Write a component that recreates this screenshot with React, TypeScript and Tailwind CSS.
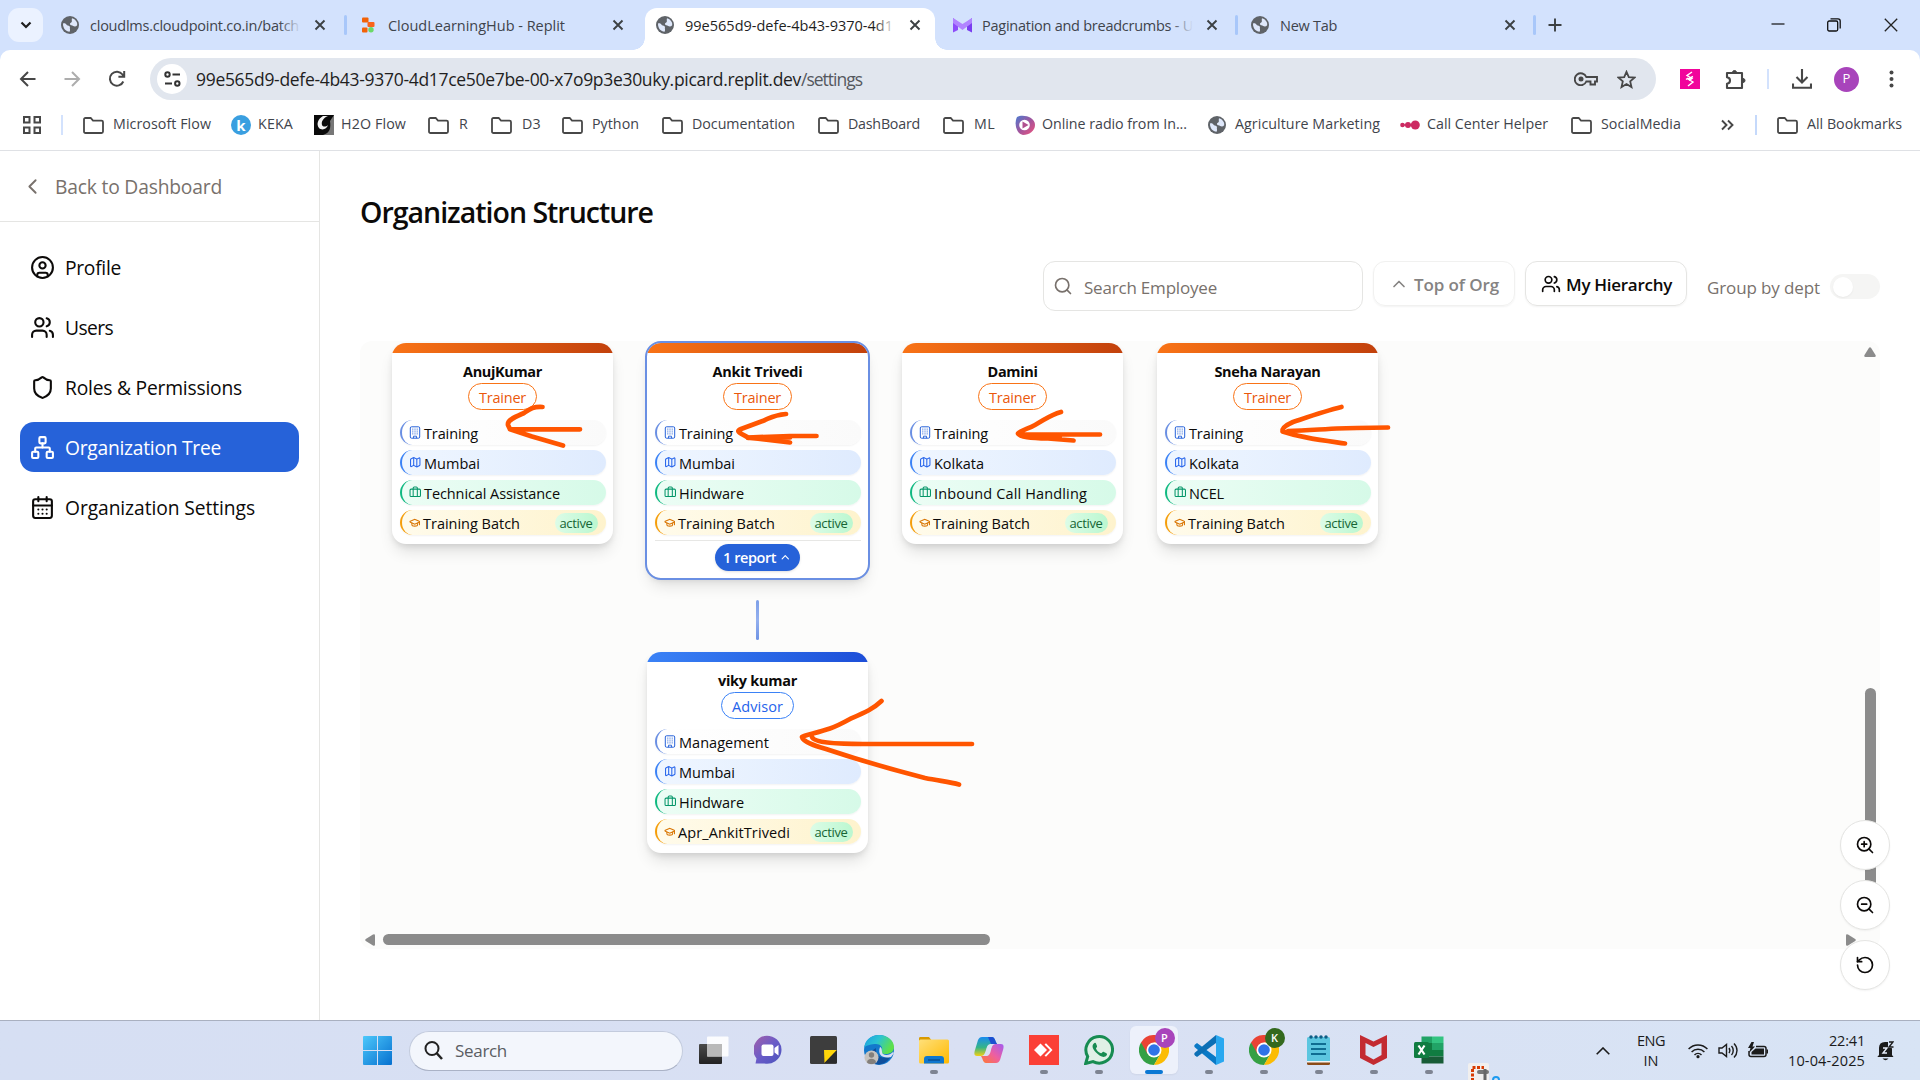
import React, { useLayoutEffect, useRef, useState } from "react";
import {
  Briefcase, CalendarDays, ChevronLeft, ChevronUp, CircleUser, GraduationCap,
  Map as MapIcon, Network, RotateCcw, Search, Shield, Users, ZoomIn, ZoomOut,
} from "lucide-react";

/* A single-line label whose tracking adapts so that it fills the given measure. */
function T({ w, className = "", children }: { w?: number; className?: string; children: string }) {
  const ref = useRef<HTMLSpanElement>(null);
  const [ls, setLs] = useState(0);
  useLayoutEffect(() => {
    if (w && ref.current) setLs((w - ref.current.getBoundingClientRect().width) / children.length);
  }, [w, children]);
  return (
    <span ref={ref} className={"shrink-0 whitespace-pre " + className} style={{ letterSpacing: ls }}>
      {children}
    </span>
  );
}

const Globe = () => (
  <svg className="size-[18px] shrink-0" viewBox="0 0 18 18">
    <circle cx="9" cy="9" r="9" fill="#5f6368" />
    <path d="M2 7.500C3.500 7 5 7.500 5.500 8.800c.5 1.200 2 .6 3 1.400.9.700.2 1.600.4 2.500.2 1.200.3 1.800-.4 3C5 15.500 1.800 12.500 2 7.500zM11 2.200c2 .5 3.700 1.800 4.700 3.800.5 1.200.6 2 .5 3.200-1 1.300-2.700 1.500-4 .8-1.100-.6-2.800-.5-3.200-1.700-.4-1.300 1.200-1.400 1.700-2.300.5-1.100-.3-2.400.3-3.800z" fill="#dfe8fb" />
  </svg>
);
const Folder = () => (
  <svg className="h-[17px] w-[21px] shrink-0" viewBox="0 0 21 17" fill="none" stroke="#474747" strokeWidth="1.800">
    <path d="M1 2.500C1 1.700 1.600 1 2.500 1h5.200l2.300 2.600h8.500c.9 0 1.500.7 1.500 1.500v9.400c0 .8-.6 1.500-1.500 1.500h-16C1.600 16 1 15.300 1 14.500z" />
  </svg>
);
const Close = ({ c = "#3c4043" }: { c?: string }) => (
  <svg className="size-[14px] shrink-0" viewBox="0 0 14 14" stroke={c} strokeWidth="1.900"><path d="M2.500 2.500l9 9M11.500 2.500l-9 9" /></svg>
);
const ReplitIcon = () => (
  <svg className="size-[18px] shrink-0" viewBox="0 0 18 18">
    <rect x="3" y="1.500" width="6.500" height="5" rx="1" fill="#f26207" /><rect x="8.500" y="6" width="7" height="5" rx="1" fill="#f9631a" />
    <rect x="3" y="11.500" width="5.500" height="5" rx="1" fill="#f26207" /><circle cx="12" cy="13.800" r="2.700" fill="#6bd968" />
  </svg>
);
const MIcon = () => (
  <svg className="h-[16px] w-[19px] shrink-0" viewBox="0 0 19 16">
    <path d="M0 1l5 4v8l-5 2.500z" fill="#8d4dfa" /><path d="M19 1l-5 4v8l5 2.500z" fill="#7a3df0" /><path d="M0 1l9.500 6L19 1v5l-9.500 7L0 6z" fill="#b184ff" />
  </svg>
);
/* Office block with a dense grid of windows. */
const OfficeIcon = () => (
  <svg className="h-[13px] w-[12px] shrink-0" viewBox="0 0 12 13" fill="none" stroke="#2662d9">
    <rect x="1.300" y=".8" width="9.400" height="11.400" rx="1.200" strokeWidth="1" />
    <path d="M3.800 2.500v6.500M6 2.500v6.500M8.200 2.500v6.500" strokeWidth=".9" strokeDasharray="1.300 .7" strokeOpacity=".85" />
    <path d="M4.500 12.200v-2h3v2" strokeWidth=".9" />
  </svg>
);

function Tab({ box, icon, title, w, fade, color = "text-[#3f444c]" }: { box: string; icon: React.ReactNode; title: string; w: number; fade?: string; color?: string }) {
  return (
    <div className={"flex h-full shrink-0 items-center " + box}>
      <div className="flex w-[19px] shrink-0 items-center">{icon}</div>
      <div className="relative ml-[10px] w-[211px]">
        <T w={w} className={"text-[14.500px] leading-5 " + color}>{title}</T>
        {fade && <div className={"absolute inset-y-0 right-0 w-[22px] bg-linear-to-r from-transparent " + fade} />}
      </div>
      <div className="ml-auto flex"><Close /></div>
    </div>
  );
}
const TabSep = () => <div className="h-5 w-[3px] shrink-0 rounded-full bg-[#a8c7fa]" />;

function TabStrip() {
  return (
    <div className="flex h-[50px] items-center bg-[#d3e2fd] pl-2">
      <div className="mr-[6px] flex h-[34px] w-[35px] shrink-0 items-center justify-center rounded-[11px] bg-[#ebf2ff]">
        <svg className="size-[12px]" viewBox="0 0 12 12" fill="none" stroke="#1f1f1f" strokeWidth="2.200"><path d="M1.500 3.500L6 8l4.500-4.500" /></svg>
      </div>
      <Tab box="w-[295px] pl-[12px] pr-[17px]" icon={<Globe />} title="cloudlms.cloudpoint.co.in/batch" w={209} fade="to-[#d3e2fd]" />
      <TabSep />
      <Tab box="w-[286px] pl-[12px] pr-[8px]" icon={<ReplitIcon />} title="CloudLearningHub - Replit" w={177} />
      <div className="h-3 w-3 shrink-0 self-end bg-[radial-gradient(circle_at_0_0,#d3e2fd_11.500px,#fff_12px)]" />
      <div className="h-[42px] w-[290px] shrink-0 self-end rounded-t-[12px] bg-white pb-2">
        <Tab box="w-full pl-[11px] pr-[13px]" icon={<Globe />} title="99e565d9-defe-4b43-9370-4d1" w={208} fade="to-white" color="text-[#1f1f1f]" />
      </div>
      <div className="h-3 w-3 shrink-0 self-end bg-[radial-gradient(circle_at_100%_0,#d3e2fd_11.500px,#fff_12px)]" />
      <Tab box="w-[288px] pl-[6px] pr-[16px]" icon={<MIcon />} title="Pagination and breadcrumbs - U" w={211} fade="to-[#d3e2fd]" />
      <TabSep />
      <Tab box="w-[295px] pl-[13px] pr-[16px]" icon={<Globe />} title="New Tab" w={57} />
      <TabSep />
      <svg className="ml-[12px] size-[14px] shrink-0" viewBox="0 0 14 14" stroke="#3c4043" strokeWidth="1.900"><path d="M7 .500v13M.500 7h13" /></svg>
      <div className="ml-auto flex items-center pr-[22px]">
        <svg className="h-[14px] w-[14px]" viewBox="0 0 14 14" stroke="#111" strokeWidth="1.200"><path d="M.500 6h13" /></svg>
        <svg className="ml-[42px] size-[14px]" viewBox="0 0 14 14" fill="none" stroke="#111" strokeWidth="1.300"><rect x=".7" y="3" width="10" height="10" rx="1.500" /><path d="M3.500 .800h7.500c1.200 0 2.200 1 2.200 2.200v7.500" /></svg>
        <svg className="ml-[43px] size-[14px]" viewBox="0 0 14 14" stroke="#222" strokeWidth="1.300"><path d="M.800 .800l12.400 12.400M13.200 .800L.800 13.200" /></svg>
      </div>
    </div>
  );
}

function Toolbar() {
  return (
    <div className="bg-[#d3e2fd]">
      <div className="flex h-[58px] items-center rounded-t-[10px] bg-white pl-[19px]">
        <svg className="size-[18px]" viewBox="0 0 18 18" fill="none" stroke="#474747" strokeWidth="2"><path d="M16.500 9H2.500M9 2L2 9l7 7" /></svg>
        <svg className="ml-[26px] size-[18px]" viewBox="0 0 18 18" fill="none" stroke="#adadad" strokeWidth="2"><path d="M1.500 9h14M9 2l7 7-7 7" /></svg>
        <svg className="ml-[27px] size-[18px]" viewBox="0 0 18 18" fill="none" stroke="#474747" strokeWidth="2"><path d="M15.300 11.500A7 7 0 1 1 14.500 4.500L16 6.200M16.200 1v5.800h-5.800" /></svg>
        <div className="ml-[24px] flex h-[42px] w-[1506px] shrink-0 items-center rounded-full bg-[#e1e6ee] pl-[7px]">
          <div className="flex size-[30px] shrink-0 items-center justify-center rounded-full bg-white">
            <svg className="h-[16px] w-[17px]" viewBox="0 0 17 16" fill="none" stroke="#333" strokeWidth="2"><circle cx="3.500" cy="3.500" r="2.200" /><path d="M8.500 3.500H16M1 12.500h7" /><circle cx="13.300" cy="12.500" r="2.200" /></svg>
          </div>
          <T w={605} className="ml-[9px] text-[17.500px] text-[#1f1f1f]">99e565d9-defe-4b43-9370-4d17ce50e7be-00-x7o9p3e30uky.picard.replit.dev</T>
          <T w={61} className="text-[17.500px] text-[#55585e]">/settings</T>
          <svg className="ml-auto h-[14px] w-[24px]" viewBox="0 0 24 14" fill="none" stroke="#474747" strokeWidth="1.900"><path d="M12.300 5A6 6 0 1 0 12.300 9.500H16.500v3h4.500v-3h2V5z" /><circle cx="7" cy="7" r="2.500" fill="#474747" stroke="none" /></svg>
          <svg className="mr-[20px] ml-[19px] size-[19px]" viewBox="0 0 19 19" fill="none" stroke="#474747" strokeWidth="1.800"><path d="M9.500 1.800l2.300 5.300 5.700.5-4.300 3.800 1.300 5.700-5-3-5 3 1.300-5.700L1.500 7.600l5.700-.5z" /></svg>
        </div>
        <svg className="ml-[24px] size-[20px] shrink-0" viewBox="0 0 20 20" fill="none"><path fill="#f1049b" d="M0 0h20v20H0z" /><path d="M12 3L7 6.500l5 3-3 2M13 7.500l-5 2.500 5 3-5 4M8 9L6 10.500" stroke="#fff" strokeWidth="1.400" /></svg>
        <svg className="ml-[25px] size-[21px] shrink-0" viewBox="0 0 21 21" fill="none" stroke="#474747" strokeWidth="2.100"><path d="M2 4h15v15H2v-4.300c2-.3 3-1.500 3-3.200S4 8.600 2 8.300z" strokeLinejoin="round" /><path d="M7.500 3.500a2 2 0 0 1 4 0zM18 9.500a2 2 0 0 1 0 4z" fill="#474747" strokeWidth="1" /></svg>
        <div className="ml-[21px] h-5 w-[2px] bg-[#d3e2fd]" />
        <svg className="ml-[23px] size-[20px] shrink-0" viewBox="0 0 20 20" fill="none" stroke="#474747" strokeWidth="2.100"><path d="M10 0v13M4.500 8l5.500 5.500L15.500 8M1 14.500v4.300h18v-4.300" /></svg>
        <div className="ml-[22px] flex size-[25px] shrink-0 items-center justify-center rounded-full bg-[#a844bb] text-[13px] text-white">P</div>
        <svg className="ml-[30px] h-[18px] w-[5px]" viewBox="0 0 5 18" fill="#474747"><circle cx="2.500" cy="2.500" r="2" /><circle cx="2.500" cy="9" r="2" /><circle cx="2.500" cy="15.500" r="2" /></svg>
      </div>
    </div>
  );
}

const bookmarks: { slot: string; icon: React.ReactNode; label: string; w: number; gap?: string }[] = [
  { slot: "w-[148px]", icon: <Folder />, label: "Microsoft Flow", w: 98, gap: "ml-[9px]" },
  { slot: "w-[83px]", icon: <div className="flex size-[20px] items-center justify-center rounded-full bg-[#3a9fe0] text-[15px] font-bold leading-none text-white">k</div>, label: "KEKA", w: 35 },
  { slot: "w-[114px]", icon: <svg className="size-[20px]" viewBox="0 0 20 20"><path d="M0 0h20v20H0z" fill="#0a0a0a" /><path d="M20 0v20H9c7-2 8-7 7-14z" fill="#777" /><path d="M9 1C4 4 2 9 5 13c3 3 8 1 9-3-2 2-5 2-6 0-1-3 1-7 6-9z" fill="#f3f3f3" /></svg>, label: "H2O Flow", w: 65 },
  { slot: "w-[63px]", icon: <Folder />, label: "R", w: 9, gap: "ml-[10px]" },
  { slot: "w-[71px]", icon: <Folder />, label: "D3", w: 19, gap: "ml-[10px]" },
  { slot: "w-[100px]", icon: <Folder />, label: "Python", w: 47, gap: "ml-[9px]" },
  { slot: "w-[156px]", icon: <Folder />, label: "Documentation", w: 103, gap: "ml-[9px]" },
  { slot: "w-[125px]", icon: <Folder />, label: "DashBoard", w: 72, gap: "ml-[9px]" },
  { slot: "w-[72px]", icon: <Folder />, label: "ML", w: 21, gap: "ml-[10px]" },
  { slot: "w-[193px]", icon: <svg className="size-[20px]" viewBox="0 0 20 20"><defs><linearGradient id="rad" x1="0" y1="0" x2="1" y2="1"><stop offset="0" stopColor="#4a7bd0" /><stop offset=".5" stopColor="#a2559d" /><stop offset="1" stopColor="#f0527a" /></linearGradient></defs><path d="M2 2c6-3 18 0 18 8 0 6-6 10-12 10C1 19-1 8 2 2z" fill="url(#rad)" /><circle cx="9.500" cy="10" r="5.300" fill="#fff" /><path d="M7.500 6.500l6 3.500-6 3.500z" fill="#b0508f" /></svg>, label: "Online radio from In...", w: 145 },
  { slot: "w-[192px]", icon: <Globe />, label: "Agriculture Marketing", w: 145, gap: "ml-[9px]" },
  { slot: "w-[171px]", icon: <svg className="h-[10px] w-[20px]" viewBox="0 0 20 10" fill="#cc2a62"><circle cx="2.500" cy="5" r="2.300" /><path d="M2 4.300h12v1.400H2z" /><circle cx="8" cy="5" r="3" /><circle cx="15.300" cy="5" r="4.500" /></svg>, label: "Call Center Helper", w: 121 },
  { slot: "w-[150px]", icon: <Folder />, label: "SocialMedia", w: 80, gap: "ml-[9px]" },
];

function BookmarksBar() {
  return (
    <div className="flex h-[43px] items-center border-b border-[#dfe1e5] bg-white pb-[8px] pl-[23px] text-[14.250px] text-[#3f444c]">
      <svg className="size-[18px] shrink-0" viewBox="0 0 18 18" fill="none" stroke="#474747" strokeWidth="2"><path d="M1 1h5.500v5.500H1zM11.500 1H17v5.500h-5.500zM1 11.500h5.500V17H1zM11.500 11.500H17V17h-5.500z" /></svg>
      <div className="mr-[20px] ml-[20px] h-5 w-[2px] shrink-0 bg-[#d3e2fd]" />
      {bookmarks.map((b) => (
        <div key={b.label} className={"flex shrink-0 items-center " + b.slot}>
          {b.icon}
          <T w={b.w} className={"pb-[2px] " + (b.gap ?? "ml-[7px]")}>{b.label}</T>
        </div>
      ))}
      <svg className="h-[12px] w-[13px] shrink-0" viewBox="0 0 13 12" fill="none" stroke="#474747" strokeWidth="1.900"><path d="M1 1.500L5.500 6 1 10.500M7 1.500L11.500 6 7 10.500" /></svg>
      <div className="mr-[20px] ml-[21px] h-5 w-[2px] shrink-0 bg-[#c5d9fb]" />
      <Folder />
      <T w={95} className="ml-[9px] pb-[2px]">All Bookmarks</T>
    </div>
  );
}

const nav = [
  { icon: CircleUser, label: "Profile", w: 56 },
  { icon: Users, label: "Users", w: 48 },
  { icon: Shield, label: "Roles & Permissions", w: 177 },
  { icon: Network, label: "Organization Tree", w: 156, active: true },
  { icon: CalendarDays, label: "Organization Settings", w: 190 },
];

function Sidebar() {
  return (
    <aside className="flex w-[320px] shrink-0 flex-col border-r border-[#e5e5e3]">
      <div className="flex h-[71px] items-center border-b border-[#e5e5e3] pl-[20px] text-[#78716c]">
        <ChevronLeft className="size-[25px]" strokeWidth={1.800} />
        <T w={167} className="ml-[10px] pt-[2px] text-[19.250px]">Back to Dashboard</T>
      </div>
      <nav className="flex flex-col gap-[10px] px-[20px] pt-[20px]">
        {nav.map((n) => (
          <div key={n.label} className={"flex h-[50px] items-center rounded-[14px] pl-[10px] " + (n.active ? "bg-[#2662d9] text-white" : "text-[#0c0a09]")}>
            <n.icon className="size-[25px]" strokeWidth={2} />
            <T w={n.w} className="ml-[10px] pt-[2px] text-[19.250px]">{n.label}</T>
          </div>
        ))}
      </nav>
    </aside>
  );
}

function Controls() {
  return (
    <div className="mt-[31px] flex h-[50px] items-start justify-end">
      <div className="flex h-[50px] w-[320px] items-center rounded-[12px] border border-[#e5e5e3] pl-[9px] text-[#78716c]">
        <Search className="size-[20px]" strokeWidth={2} />
        <T w={133} className="ml-[11px] pt-[4px] text-[17px]">Search Employee</T>
      </div>
      <div className="ml-[10px] flex h-[45px] w-[142px] items-center rounded-[12px] border border-[#f1f1f0] pl-[15px] text-[#858382] shadow-xs">
        <ChevronUp className="size-[20px]" strokeWidth={2} />
        <T w={85} className="ml-[5px] pt-[2px] text-[17px] font-semibold">Top of Org</T>
      </div>
      <div className="ml-[10px] flex h-[45px] w-[162px] items-center rounded-[12px] border border-[#e5e5e3] pl-[15px] text-[#0c0a09] shadow-xs">
        <Users className="size-[20px]" strokeWidth={2} />
        <T w={106} className="ml-[5px] pt-[2px] text-[17px] font-semibold">My Hierarchy</T>
      </div>
      <T w={113} className="mt-[14px] ml-[20px] text-[17px] text-[#78716c]">Group by dept</T>
      <div className="mt-[13px] ml-[10px] flex h-[25px] w-[50px] items-center rounded-full bg-[#f5f5f4] pl-[3px]">
        <div className="size-[20px] rounded-full bg-white shadow-xs" />
      </div>
    </div>
  );
}

type Person = {
  name: [string, number]; role: [string, number]; dept: [string, number]; city: [string, number];
  client: [string, number]; batch: [string, number]; blue?: boolean; reports?: boolean;
};
const row = "flex h-[25px] items-center rounded-full border-l-[2.500px] pl-[7px] shadow-xs ";

function PersonCard({ p }: { p: Person }) {
  return (
    <div className={"w-[221px] shrink-0 overflow-hidden rounded-[14px] bg-white shadow-[0_10px_16px_-3px_rgba(0,0,0,.12),0_3px_6px_-1px_rgba(0,0,0,.10)] " + (p.reports ? "mb-[2px] h-[235px] outline-2 outline-[#6a8fe3]" : "h-[201px]")}>
      <div className={"h-[10px] bg-linear-to-r " + (p.blue ? "from-[#3b82f6] to-[#1d4ed8]" : "from-[#f97316] to-[#c2410c]")} />
      <div className="flex flex-col items-center px-[7.500px] pt-[8px] text-[#0c0a09]">
        <T w={p.name[1]} className="text-[14.500px] leading-[22px] font-bold">{p.name[0]}</T>
        <div className={"flex h-[27px] items-center rounded-full border px-[10px] pt-[2px] " + (p.blue ? "border-[#3b82f6] text-[#2563eb]" : "border-[#f97316] text-[#ea580c]")}>
          <T w={p.role[1]} className="text-[14.500px] leading-5 font-medium">{p.role[0]}</T>
        </div>
        <div className="mt-[10px] flex w-full flex-col gap-[5px] text-[14.500px] leading-[22px] font-medium">
          <div className={row + "border-[#6a8fe3] bg-linear-to-r from-white to-[#fafafa]"}>
            <OfficeIcon />
            <T w={p.dept[1]} className="ml-[3.500px] pt-[3px]">{p.dept[0]}</T>
          </div>
          <div className={row + "border-[#3b82f6] bg-linear-to-r from-[#eff6ff] to-[#dfebfe]"}>
            <MapIcon className="size-[12.500px] text-[#2563eb]" strokeWidth={2} />
            <T w={p.city[1]} className="ml-[3px] pt-[3px]">{p.city[0]}</T>
          </div>
          <div className={row + "border-[#10b981] bg-linear-to-r from-[#ecfdf5] to-[#d6fae8]"}>
            <Briefcase className="size-[12.500px] text-[#059669]" strokeWidth={2} />
            <T w={p.client[1]} className="ml-[3px] pt-[3px]">{p.client[0]}</T>
          </div>
          <div className={row + "border-[#f59e0b] bg-linear-to-r from-[#fffbeb] to-[#fef3cd]"}>
            <GraduationCap className="size-[11.500px] text-[#d97706]" strokeWidth={2.200} />
            <T w={p.batch[1]} className="ml-[3px] pt-[3px]">{p.batch[0]}</T>
            <div className="mr-[8px] ml-auto flex h-[20px] items-center rounded-full bg-linear-to-r from-[#dcfce7] to-[#bbf7d0] px-[5px] pt-px text-[13px] font-normal text-[#166534]">
              <T w={33}>active</T>
            </div>
          </div>
        </div>
        {p.reports && (
          <div className="mt-[5px] flex w-full justify-center border-t border-[#e7e7e5] pt-[3px]">
            <div className="flex h-[27px] w-[85px] items-center rounded-full bg-[#2662d9] pl-[8px] text-white shadow-sm">
              <T w={53} className="pt-px text-[14.500px] leading-5 font-semibold">1 report</T>
              <ChevronUp className="ml-[3px] size-[12.500px]" strokeWidth={2.200} />
            </div>
          </div>
        )}
      </div>
    </div>
  );
}

const anuj: Person = { name: ["AnujKumar", 79], role: ["Trainer", 47], dept: ["Training", 54], city: ["Mumbai", 56], client: ["Technical Assistance", 136], batch: ["Training Batch", 97] };
const ankit: Person = { name: ["Ankit Trivedi", 90], role: ["Trainer", 47], dept: ["Training", 54], city: ["Mumbai", 56], client: ["Hindware", 65], batch: ["Training Batch", 97], reports: true };
const damini: Person = { name: ["Damini", 50], role: ["Trainer", 47], dept: ["Training", 54], city: ["Kolkata", 50], client: ["Inbound Call Handling", 153], batch: ["Training Batch", 97] };
const sneha: Person = { name: ["Sneha Narayan", 106], role: ["Trainer", 47], dept: ["Training", 54], city: ["Kolkata", 50], client: ["NCEL", 35], batch: ["Training Batch", 97] };
const viky: Person = { name: ["viky kumar", 79], role: ["Advisor", 51], dept: ["Management", 90], city: ["Mumbai", 56], client: ["Hindware", 65], batch: ["Apr_AnkitTrivedi", 112], blue: true };

/* Hand-drawn pointer strokes laid over the tree. */
function Annotations() {
  return (
    <svg className="pointer-events-none absolute top-0 left-0 h-[608px] w-[1520px]" viewBox="360 341 1520 608" fill="none" stroke="#ff5500" strokeWidth="4.700" strokeLinecap="round" strokeLinejoin="round">
      <path d="M542.500 407C532 406.500 530 409 524 413C515 417 507 420 508 425L510 429.300H580M510 429.300L532 436.500L563 445.500" />
      <path d="M786 414C774 415 772 417 764 420.500L741 429C736 431 738 432 748 437.500L790 442.500M748 437.500L790 436H816.500" />
      <path d="M748 438L790 437.500" />
      <path d="M1061 412C1050 415 1046 419 1035 425C1028 429 1021 430 1018 433.500C1020 437 1030 438 1048 438.500L1073.500 440.500M1019 434L1030 434.500H1100M1024 436H1060" />
      <path d="M1341.500 407C1325 411 1308 417 1293 422C1284 426 1282 429 1282.500 431.500C1302 438 1320 440 1345 443.500M1288 431C1315 430 1338 428 1357 428L1388 427.500" />
      <path d="M881.500 701C873 709 866 712 850 719C841 724 837 726 830 728.500C817 733 804 735 802 737C803 742 816 746 826 749C850 757 890 769 925 778C940 781 950 782 959 784.500M812 737C814 743 840 744 863 744H972" />
    </svg>
  );
}

function OrgTree() {
  return (
    <div className="relative mt-[30px] h-[608px] w-[1520px] rounded-[12px] bg-[#fcfcfb]">
      <div className="flex items-start gap-[34px] overflow-hidden rounded-[12px] pt-[2px] pb-[20px] pl-[32px]">
        <PersonCard p={anuj} />
        <div className="flex flex-col items-center">
          <PersonCard p={ankit} />
          <div className="my-[20px] mb-[12px] h-[40px] w-[3px] rounded-full bg-linear-to-b from-[#7d9fe8] via-[#94b0ef] to-[#6f93e4]" />
          <PersonCard p={viky} />
        </div>
        <PersonCard p={damini} />
        <PersonCard p={sneha} />
      </div>
      <Annotations />
      <svg className="absolute top-[6px] right-[4px] h-[10px] w-[12px]" viewBox="0 0 12 10" fill="#8b8b8b"><path d="M5 .8Q6-.4 7 .8L11.500 8Q12.300 10 10.500 10h-9Q-.3 10 .5 8z" /></svg>
      <div className="absolute top-[347px] right-[4px] h-[207px] w-[11px] rounded-full bg-[#8b8b8b]" />
      <svg className="absolute bottom-[3px] left-[5px] h-[12px] w-[10px]" viewBox="0 0 10 12" fill="#8b8b8b"><path d="M.8 5Q-.4 6 .8 7L8 11.500Q10 12.300 10 10.500v-9Q10-.3 8 .5z" /></svg>
      <div className="absolute bottom-[4px] left-[23px] h-[11px] w-[607px] rounded-full bg-[#8b8b8b]" />
      <svg className="absolute right-[24px] bottom-[3px] h-[12px] w-[10px]" viewBox="0 0 10 12" fill="#8b8b8b"><path d="M9.200 5Q10.400 6 9.200 7L2 11.500Q0 12.300 0 10.500v-9Q0-.3 2 .5z" /></svg>
      <div className="absolute top-[479px] right-[-10px] flex flex-col gap-[10px] text-[#0c0a09]">
        {[ZoomIn, ZoomOut, RotateCcw].map((I, i) => (
          <div key={i} className="flex size-[50px] items-center justify-center rounded-full border border-[#e5e5e3] bg-white shadow-xs"><I className="size-[20px]" strokeWidth={2} /></div>
        ))}
      </div>
    </div>
  );
}

const Chrome = () => (
  <svg className="size-[30px]" viewBox="0 0 30 30">
    <path d="M2 7.500A15 15 0 0 0 15 30L21.500 18.700 15 15z" fill="#34a044" />
    <path d="M2 7.500A15 15 0 0 1 28 7.500H15L8.500 18.800z" fill="#ea4335" />
    <path d="M15 7.500h13A15 15 0 0 1 15 30l6.500-11.300z" fill="#fbbc04" /><circle cx="15" cy="15" r="7.500" fill="#fff" /><circle cx="15" cy="15" r="5.800" fill="#2f73e8" />
  </svg>
);
const Badged = ({ letter, color }: { letter: string; color: string }) => (
  <div className="relative">
    <Chrome />
    <div className={"absolute -top-[7px] -right-[6px] flex size-[20px] items-center justify-center rounded-full text-[11px] font-semibold text-white " + color}>{letter}</div>
  </div>
);

const apps: { icon: React.ReactNode; run?: boolean; active?: boolean }[] = [
  { icon: <svg className="size-[30px]" viewBox="0 0 30 30"><defs><linearGradient id="tv" x1="0" y1="0" x2="0" y2="1"><stop stopColor="#4a4a4a" /><stop offset="1" stopColor="#222" /></linearGradient></defs><rect x="0" y="9" width="23" height="20" rx="1" fill="url(#tv)" /><rect x="8" y="1.500" width="21.500" height="20" rx="1" fill="#fff" fillOpacity=".9" /><path d="M8 9h15v12.500H8z" fill="#b9b9b9" /></svg> },
  { icon: <svg className="size-[30px]" viewBox="0 0 30 30"><defs><linearGradient id="tm" x1="0" y1="0" x2="1" y2="1"><stop stopColor="#a45fa8" /><stop offset=".5" stopColor="#6a5cc8" /><stop offset="1" stopColor="#4b53bc" /></linearGradient></defs><path d="M15.500 1a14 13.500 0 1 1-5 27.500H1.500l1-5A14 14 0 0 1 15.500 1z" fill="url(#tm)" /><rect x="7.500" y="9.500" width="12" height="11.500" rx="2" fill="#fff" /><path d="M20.500 13l4-3v10.500l-4-3z" fill="#fff" /></svg> },
  { icon: <svg className="h-[28px] w-[27px]" viewBox="0 0 27 28"><rect width="27" height="28" rx="1.500" fill="#3d3d3d" /><path d="M14 14h13L14.500 27z" fill="#ffd60a" /><path d="M14.500 27L27 14v13z" fill="#2b2b2b" /></svg> },
  { icon: <svg className="size-[30px]" viewBox="0 0 30 30"><defs><linearGradient id="eg" x1="0" y1="0" x2="1" y2=".4"><stop stopColor="#1b9de2" /><stop offset=".5" stopColor="#2bc3d2" /><stop offset="1" stopColor="#5ee04a" /></linearGradient></defs><circle cx="15" cy="15" r="15" fill="#1378cc" /><path d="M0 13C1 5 7 0 15 0c9 0 15 6 15 12 0 5-4 7-8 7-4 0-6-1-4-4 1-3-2-6-6-6S2 10 0 13z" fill="url(#eg)" /><path d="M12 13c-1 8 6 12 15 8-4 8-13 11-19 6-4-5-2-11 4-14z" fill="#0f4f9c" /><path d="M16 12c3 1 1 5 3 7 3 2 7 1 10-2l1 1-3 4c-8 2-14-2-11-10z" fill="#d8e0f2" /><circle cx="7.500" cy="22.500" r="7" fill="#c6c3bf" /><circle cx="7.500" cy="20" r="2.700" fill="#837f7b" /><path d="M3 27.500c0-5 9-5 9 0-2 2-7 2-9 0z" fill="#837f7b" /></svg> },
  { icon: <svg className="size-[30px]" viewBox="0 0 30 30"><defs><linearGradient id="fe" x1="0" y1="0" x2="1" y2="1"><stop stopColor="#ffe07a" /><stop offset="1" stopColor="#ffb900" /></linearGradient></defs><path d="M0 3.500C0 2.500.5 2 1.500 2H10l3 4H0z" fill="#d99a00" /><rect y="4.500" width="30" height="24" rx="1.500" fill="url(#fe)" /><path d="M5 28.500V24q0-3 3-3h14q3 0 3 3v4.500z" fill="#0f77cf" /><path d="M9 25h12" stroke="#0a4f95" strokeWidth="1.500" /></svg>, run: true },
  { icon: <svg className="size-[30px]" viewBox="0 0 30 30"><defs><linearGradient id="ca" x1="0" y1="0" x2="0" y2="1"><stop stopColor="#1a8cf0" /><stop offset=".55" stopColor="#35b587" /><stop offset="1" stopColor="#f2d013" /></linearGradient><linearGradient id="cb" x1="1" y1="0" x2="0" y2="1"><stop stopColor="#a35bf0" /><stop offset=".5" stopColor="#ee5fa0" /><stop offset="1" stopColor="#ff7a2e" /></linearGradient></defs><path d="M8 2h10c3 0 3 4 5 7h-6c-3 0-4 2-5 6-1 3-2 6-5 6H3c-3 0-3-3-2-6l3-10c1-2 2-3 4-3z" fill="url(#ca)" /><path d="M22 28H12c-3 0-3-4-5-7h5c3 0 4-2 5-6s2-6 5-6h5c3 0 3 3 2 6l-3 10c-1 2-2 3-4 3z" fill="url(#cb)" /><path d="M14 2h4c3 0 3 4 5 7h-6z" fill="#1c4fd0" /></svg> },
  { icon: <svg className="size-[30px]" viewBox="0 0 30 30"><path fill="#fb4036" d="M0 0h30v30H0z" /><path d="M5 15l6.500-6.500L18 15l-6.500 6.500z" fill="#fff" /><path d="M15.500 9.500l1.500-1.300 6.500 6.800-6.500 6.800-1.500-1.300L21 15z" fill="#fff" /></svg>, run: true },
  { icon: <svg className="size-[30px]" viewBox="0 0 30 30" fill="none"><path d="M1.700 28.500l2-7A13.300 13.300 0 1 1 9 26.600z" fill="#dff0e6" stroke="#178c52" strokeWidth="3" /><path d="M10.500 8c-3 2-2.500 5.500 1.500 9.500s8 6 10.500 3c1-1.500.5-2-.5-2.500l-2.500-1.200c-1-.5-1.500 1.700-2.500 1.500-2-.5-4.500-3-5-4.800-.2-.8 1.500-1.300 1-2.500L12 8.500c-.3-.8-.8-1-1.500-.5z" fill="#178c52" /></svg>, run: true },
  { icon: <Badged letter="P" color="bg-[#a844bb]" />, run: true, active: true },
  { icon: <svg className="size-[30px]" viewBox="0 0 30 30"><path d="M22 0v30L1 12.500Q-.5 11 1 9.500l2-1.500L22 22z" fill="#0a79c6" /><path d="M22 0L1 17.500Q-.5 19 1 20.500L3 22 22 8z" fill="#0c6fb5" /><path d="M22 0l8 3.500v23L22 30z" fill="#29a8f0" /></svg>, run: true },
  { icon: <Badged letter="K" color="bg-[#33691e]" />, run: true },
  { icon: <svg className="h-[30px] w-[23px]" viewBox="0 0 23 30"><rect y="2" width="23" height="26" rx="1.500" fill="#5cc6e0" /><path d="M0 27h23v1.500Q23 30 21.500 30h-20Q0 30 0 28.500z" fill="#8a4b18" /><path d="M0 26h23v1.500H0z" fill="#f4f4f4" /><path d="M4 9h15M4 14h15M4 19h15" stroke="#0f6d92" strokeWidth="1.800" /><path d="M4 2v.1M9 2v.1M14 2v.1M19 2v.1" stroke="#0f5d85" strokeWidth="3.500" strokeLinecap="round" /></svg>, run: true },
  { icon: <svg className="h-[30px] w-[27px]" viewBox="0 0 27 30"><path d="M0 0l13.500 6.500L27 0v23l-13.500 7L0 23zM5.500 8v12l8 4.500 8-4.500V8l-8 4z" fill="#c32b31" fillRule="evenodd" /></svg>, run: true },
  { icon: <svg className="size-[30px]" viewBox="0 0 30 30"><path d="M7.500 1.500H18V8H7.500z" fill="#21a366" /><path d="M18 1.500h11.500V8H18z" fill="#33c481" /><path d="M7.500 8H18v7H7.500z" fill="#107c41" /><path d="M18 8h11.500v7H18z" fill="#21a366" /><path d="M7.500 15h22v6.500h-22z" fill="#107c41" /><path d="M7.500 21.500h22v7h-22z" fill="#185c37" /><rect y="7" width="15" height="16" rx="1.500" fill="#107c41" /><path d="M4.500 10.500l6 9M10.500 10.500l-6 9" stroke="#fff" strokeWidth="2.200" /></svg>, run: true },
];

function Taskbar() {
  return (
    <footer className="flex h-[60px] items-center overflow-hidden border-t border-[#a9b0c0] bg-linear-to-r from-[#d6dff3] via-[#d9e0f3] to-[#d8e4f5] pl-[363px] text-[#1b1b1b]">
      <svg className="size-[29px] shrink-0" viewBox="0 0 29 29"><defs><linearGradient id="win" x1="0" y1="0" x2="1" y2="1"><stop stopColor="#4cc8fb" /><stop offset="1" stopColor="#0670cf" /></linearGradient></defs><path d="M0 1q0-1 1-1h13v14H0zM15 0h13q1 0 1 1v13H15zM0 15h14v14H1q-1 0-1-1zM15 15h14v13q0 1-1 1H15z" fill="url(#win)" /></svg>
      <div className="ml-[17px] flex h-[40px] w-[274px] shrink-0 items-center rounded-full border border-[#c3cbdd] border-b-[#aab2c6] bg-[#f3f6fc] pl-[14px]">
        <svg className="size-[19px]" viewBox="0 0 19 19" fill="none" stroke="#222" strokeWidth="2"><circle cx="8" cy="7.500" r="6.500" /><path d="M12.500 12l5.500 6" strokeWidth="2.500" /></svg>
        <T w={52} className="ml-[12px] text-[17px] text-[#5a5d63]">Search</T>
      </div>
      <div className="ml-[3px] flex h-full shrink-0">
        {apps.map((a, i) => (
          <div key={i} className="flex w-[55px] flex-col items-center pt-[5px]">
            <div className={"flex h-[48px] w-[48px] flex-col items-center rounded-[6px] pt-[9px] " + (a.active ? "bg-[#edf1fb] shadow-xs" : "")}>
              <div className="flex h-[30px] items-center">{a.icon}</div>
              {a.run && <div className={"mt-[5px] h-[4px] shrink-0 rounded-full " + (a.active ? "w-[18px] bg-[#0a78d4]" : "w-[8px] bg-[#7e8492]")} />}
            </div>
          </div>
        ))}
        <svg className="mt-[42px] ml-[12px] h-[20px] w-[32px]" viewBox="0 0 32 20" fill="none"><rect width="21" height="20" rx="2" fill="#f1efee" /><path d="M4.500 18V4.500H16" stroke="#d83b01" strokeWidth="3" strokeDasharray="3 1.500" /><rect x="9" y="7" width="12" height="4" rx="2" fill="#777" /><path d="M17 6v14h7" stroke="#666" strokeWidth="3" /><circle cx="28" cy="17" r="3" stroke="#1d9bf0" strokeWidth="2" /></svg>
      </div>
      <div className="ml-auto flex shrink-0 items-center pr-[26px]">
        <svg className="h-[8px] w-[14px]" viewBox="0 0 14 8" fill="none" stroke="#1b1b1b" strokeWidth="1.600"><path d="M.700 7.300L7 1l6.300 6.300" /></svg>
        <div className="ml-[27px] flex w-[28px] flex-col items-center text-[14.500px] leading-[20px]"><T w={28}>ENG</T><T w={15}>IN</T></div>
        <svg className="ml-[23px] h-[16px] w-[20px]" viewBox="0 0 20 16" fill="none" stroke="#1b1b1b" strokeWidth="1.500"><path d="M.600 6a13 13 0 0 1 18.800 0M3.600 9a9 9 0 0 1 12.800 0M6.500 12a5 5 0 0 1 7 0" /><circle cx="10" cy="13.700" r="1.600" fill="#1b1b1b" stroke="none" /></svg>
        <svg className="ml-[10px] h-[17px] w-[20px]" viewBox="0 0 20 17" fill="none" stroke="#1b1b1b" strokeWidth="1.400"><path d="M1 6v5h3l4.500 3.500v-12L4 6zM11 6c1 1.500 1 3.500 0 5M13.500 4c2.300 2.500 2.300 6.500 0 9M16 1.500c4 4 4 10 0 14" /></svg>
        <svg className="ml-[10px] h-[17px] w-[20px]" viewBox="0 0 20 17"><path d="M8 4.500h8q2 0 2 2v6q0 2-2 2H3q-2 0-2-2V9" fill="none" stroke="#1b1b1b" strokeWidth="1.500" /><path d="M7.500 6.500H16v6H3.500v-2.500zM18.500 7.500H20v4h-1.500zM3.500 0L0 6h2.500L1 11l6-6.500H4.500L6 0z" fill="#1b1b1b" /></svg>
        <div className="ml-[20px] flex w-[77px] flex-col items-end text-[14.500px] leading-[20px]"><T w={36}>22:41</T><T w={77}>10-04-2025</T></div>
        <svg className="ml-[12px] h-[20px] w-[17px]" viewBox="0 0 17 20"><path d="M2 14V7q0-6 6-6h5l2 7v6l1.500 2H.3z" fill="#1b1b1b" /><path d="M5.500 17.500h6q-3 3.500-6 0z" fill="#1b1b1b" /><path d="M6 7h4L6 12h4" fill="none" stroke="#e8eefa" strokeWidth="1.400" /><path d="M11 0h6v7h-6z" fill="#d8e4f5" /><path d="M12 1h4L12 6h4.500" fill="none" stroke="#1b1b1b" strokeWidth="1.400" /></svg>
      </div>
    </footer>
  );
}

export default function App() {
  return (
    <div className="flex h-[1080px] w-[1920px] flex-col overflow-hidden bg-white font-['Open_Sans','Noto_Sans',sans-serif]">
      <TabStrip />
      <Toolbar />
      <BookmarksBar />
      <div className="flex min-h-0 flex-1">
        <Sidebar />
        <main className="flex flex-1 flex-col pr-[40px] pl-[40px]">
          <h1 className="flex h-[79px] items-end text-[28.500px] leading-[36px] font-semibold text-[#0c0a09]"><T w={293}>Organization Structure</T></h1>
          <Controls />
          <OrgTree />
        </main>
      </div>
      <Taskbar />
    </div>
  );
}
